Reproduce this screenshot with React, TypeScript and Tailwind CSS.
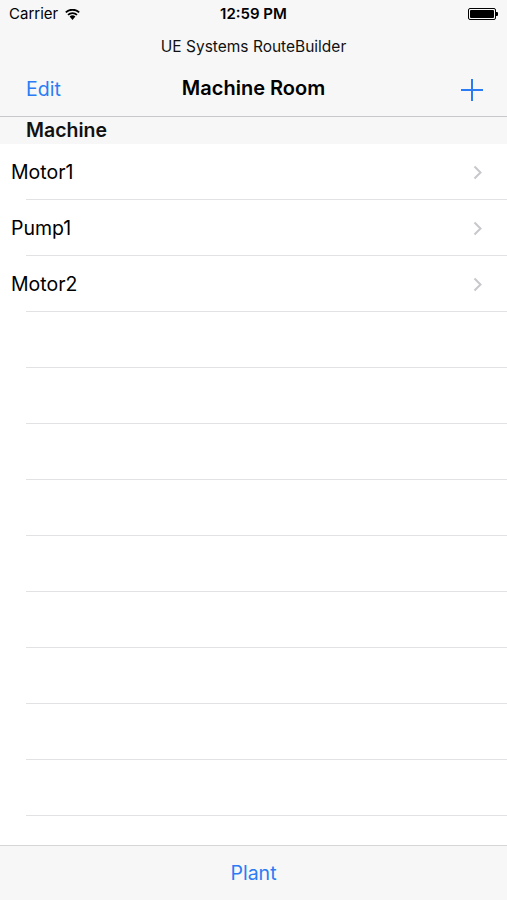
import React from 'react';

const font = { fontFamily: 'Inter, "Liberation Sans", sans-serif' };

const Wifi: React.FC = () => (
  <svg width="15" height="11" viewBox="0 0 15 11" className="ml-[7px]">
    <path d="M7.5 11 L4.6 7.6 A4.4 4.4 0 0 1 10.4 7.6 Z" fill="#000" />
    <path d="M2.4 5.2 A7.4 7.4 0 0 1 12.6 5.2 L11.4 6.6 A5.6 5.6 0 0 0 3.6 6.6 Z" fill="#000" />
    <path d="M0.2 2.7 A10.6 10.6 0 0 1 14.8 2.7 L13.6 4.1 A8.8 8.8 0 0 0 1.4 4.1 Z" fill="#000" />
  </svg>
);

const Battery: React.FC = () => (
  <div className="flex items-center">
    <div className="w-[28px] h-[12px] rounded-[2px] border border-black p-[1px]">
      <div className="w-full h-full bg-black rounded-[1px]" />
    </div>
    <div className="w-[2px] h-[4px] bg-black rounded-r-[1px]" />
  </div>
);

const Chevron: React.FC = () => (
  <svg width="9" height="15" viewBox="0 0 9 15">
    <path d="M1.5 1.5 L7.5 7.5 L1.5 13.5" fill="none" stroke="#c7c7cc" strokeWidth="2" />
  </svg>
);

const App: React.FC = () => {
  const machines = ['Motor1', 'Pump1', 'Motor2'];
  const emptyRows = Array.from({ length: 9 });

  return (
    <div className="w-[507px] h-[900px] flex flex-col bg-white overflow-hidden" style={font}>
      {/* status bar */}
      <div className="bg-[#f7f7f7] h-[28px] flex items-center justify-between px-[9px] relative">
        <div className="flex items-center text-[15px] text-black">
          Carrier
          <Wifi />
        </div>
        <div className="absolute left-0 right-0 text-center text-[15px] font-semibold text-black">12:59 PM</div>
        <Battery />
      </div>

      {/* title */}
      <div className="bg-[#f7f7f7] h-[38px] flex items-center justify-center text-[15.5px] text-[#111]">
        UE Systems RouteBuilder
      </div>

      {/* nav bar */}
      <div className="bg-[#f7f7f7] h-[51px] flex items-center justify-between pl-[26px] pr-[24px] pb-[3px] border-b border-[#c8c8cc] relative">
        <span className="text-[19.5px] text-[#2b7cf4]">Edit</span>
        <span className="absolute left-0 right-0 pb-[3px] text-center text-[20px] font-semibold text-black pointer-events-none">
          Machine Room
        </span>
        <svg width="22" height="22" viewBox="0 0 22 22">
          <path d="M11 0 V22 M0 11 H22" stroke="#2b7cf4" strokeWidth="2" />
        </svg>
      </div>

      {/* section header */}
      <div className="bg-[#f7f7f7] h-[27px] flex items-center pl-[26px] pt-[1px] text-[19.5px] font-semibold text-[#111]">
        Machine
      </div>

      {/* list */}
      <div className="flex-1 flex flex-col">
        {machines.map((m) => (
          <div key={m} className="h-[56px] flex flex-col">
            <div className="flex-1 flex items-center justify-between pl-[11px] pr-[25px] pt-[2px]">
              <span className="text-[19.5px] text-black">{m}</span>
              <Chevron />
            </div>
            <div className="ml-[26px] h-px bg-[#e2e2e4]" />
          </div>
        ))}
        {emptyRows.map((_, i) => (
          <div key={i} className="h-[56px] flex flex-col">
            <div className="flex-1" />
            <div className="ml-[26px] h-px bg-[#e2e2e4]" />
          </div>
        ))}
      </div>

      {/* toolbar */}
      <div className="h-[55px] bg-[#f7f7f7] border-t border-[#d6d6d8] flex items-center justify-center pt-[1px]">
        <span className="text-[19.5px] text-[#2b7cf4]">Plant</span>
      </div>
    </div>
  );
};

export default App;
